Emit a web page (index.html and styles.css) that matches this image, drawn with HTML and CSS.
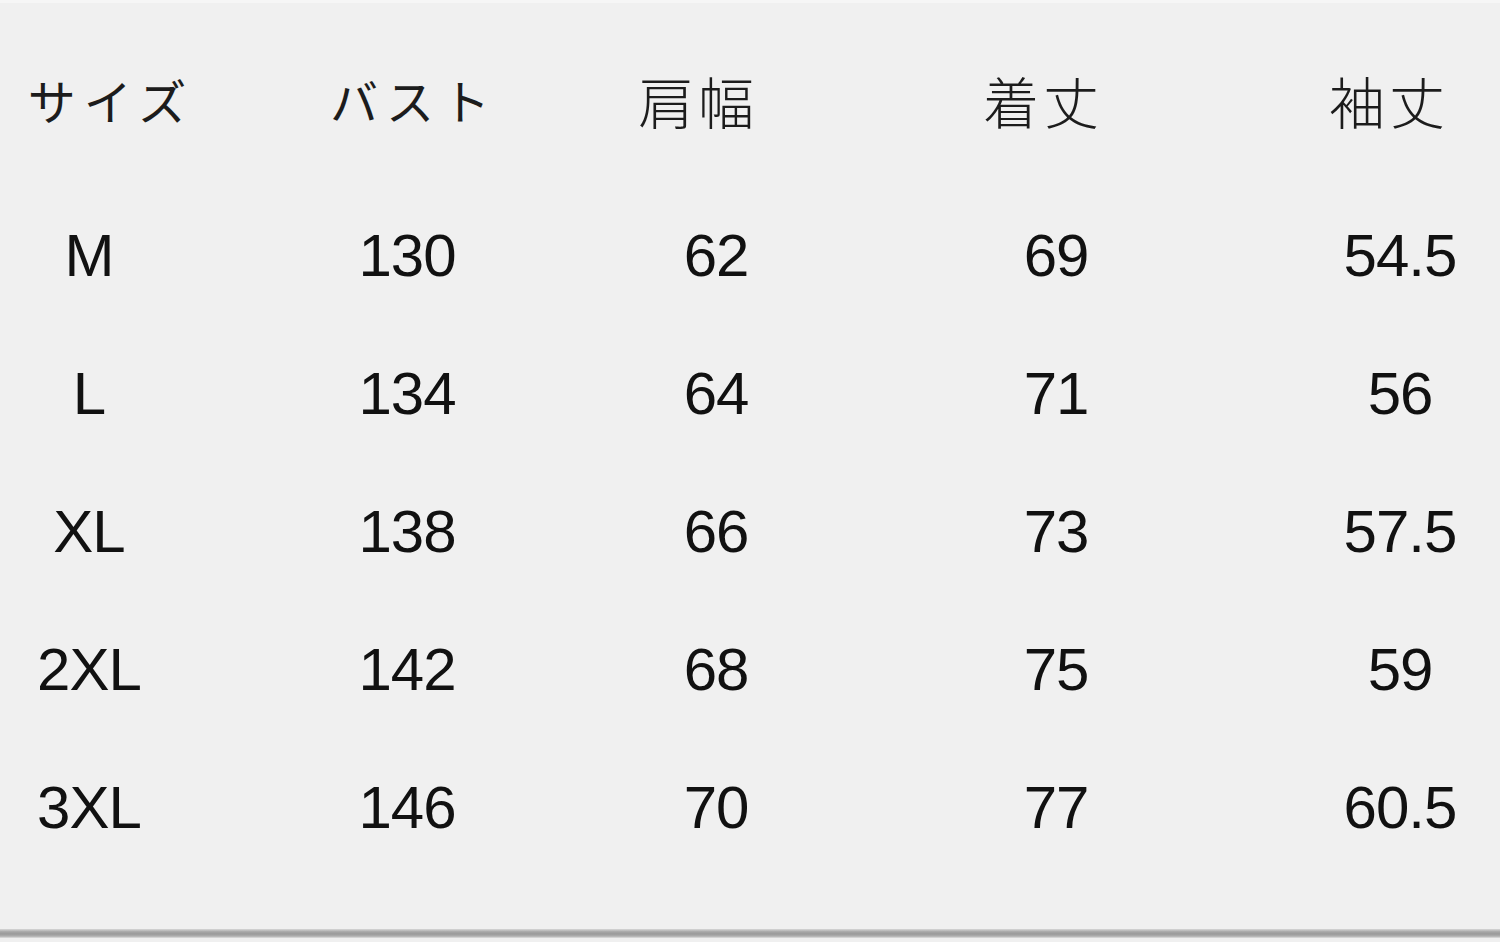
FILE: index.html
```html
<!DOCTYPE html>
<html lang="ja">
<head>
<meta charset="utf-8">
<title>サイズ表</title>
<link rel="stylesheet" href="styles.css">
</head>
<body>
<div class="sheet">
  <div class="table">
    <div class="row head">
      <div class="cell kana">サイズ</div>
      <div class="cell kana">バスト</div>
      <div class="cell kanji">肩幅</div>
      <div class="cell kanji">着丈</div>
      <div class="cell kanji">袖丈</div>
    </div>
    <div class="row data"><div class="cell">M</div><div class="cell">130</div><div class="cell">62</div><div class="cell">69</div><div class="cell">54.5</div></div>
    <div class="row data"><div class="cell">L</div><div class="cell">134</div><div class="cell">64</div><div class="cell">71</div><div class="cell">56</div></div>
    <div class="row data"><div class="cell">XL</div><div class="cell">138</div><div class="cell">66</div><div class="cell">73</div><div class="cell">57.5</div></div>
    <div class="row data"><div class="cell">2XL</div><div class="cell">142</div><div class="cell">68</div><div class="cell">75</div><div class="cell">59</div></div>
    <div class="row data"><div class="cell">3XL</div><div class="cell">146</div><div class="cell">70</div><div class="cell">77</div><div class="cell">60.5</div></div>
  </div>
  <div class="rule"></div>
</div>
</body>
</html>
```
FILE: styles.css
```css
html, body {
  margin: 0;
  padding: 0;
}
body {
  width: 1500px;
  height: 942px;
  background: #f4f4f4;
  overflow: hidden;
}
.sheet {
  height: 942px;
  display: flex;
  flex-direction: column;
  background: #f0f0f0;
  border-top: 3px solid #f6f6f6;
  box-sizing: border-box;
}
.table {
  display: flex;
  flex-direction: column;
  height: 926px;
}
.row {
  display: grid;
  align-items: center;
  justify-items: center;
}
.head {
  height: 174px;
  padding-top: 9px;
  grid-template-columns: 214px 392px 180px 510px 182px;
  font-family: "Noto Sans CJK JP", sans-serif;
  color: #1c1c1c;
}
.kana {
  font-size: 48px;
  letter-spacing: 8px;
  margin-right: -8px;
  font-weight: 400;
}
.kanji {
  font-size: 56px;
  letter-spacing: 4px;
  margin-right: -4px;
  font-weight: 300;
}
.data {
  height: 138px;
  grid-template-columns: 178px 458px 160px 520px 168px;
  font-family: "Liberation Sans", Arial, sans-serif;
  font-size: 60px;
  color: #111;
  letter-spacing: -1px;
}
.rule {
  height: 9px;
  background: linear-gradient(to bottom, #d8d8d8 0%, #a8a8a8 30%, #9a9a9a 55%, #b0b0b0 80%, #e0e0e0 100%);
}
```
